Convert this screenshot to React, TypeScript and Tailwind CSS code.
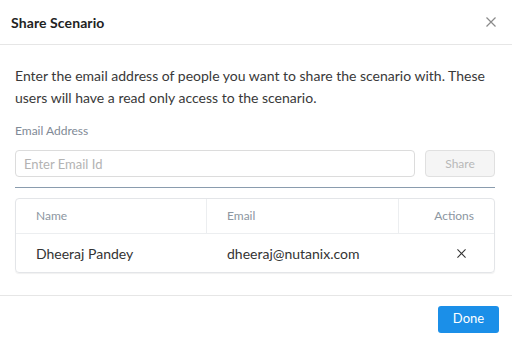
import React, { useState } from 'react';

interface Share {
  name: string;
  email: string;
}

const CloseIcon: React.FC<{ className?: string }> = ({ className }) => (
  <svg viewBox="0 0 10 10" className={className} fill="none" stroke="currentColor" strokeWidth="1.2">
    <path d="M0.5 0.5 L9.5 9.5 M9.5 0.5 L0.5 9.5" />
  </svg>
);

export default function App() {
  const [email, setEmail] = useState('');
  const [shares, setShares] = useState<Share[]>([
    { name: 'Dheeraj Pandey', email: 'dheeraj@nutanix.com' },
  ]);

  return (
    <div className="w-[512px] h-[342px] bg-white flex flex-col text-[#333] font-['Lato','Open_Sans',sans-serif]">
      {/* Header */}
      <div className="h-[45px] shrink-0 border-b border-[#e6e6e6] flex items-center justify-between pl-[11px] pr-[16px]">
        <h2 className="text-[14px] font-bold text-[#222] tracking-[0.1px]">Share Scenario</h2>
        <button className="text-[#8a8a8a]">
          <CloseIcon className="w-[10px] h-[10px]" />
        </button>
      </div>

      {/* Body */}
      <div className="flex-1 px-[15px] pt-[20px] pr-[17px]">
        <p className="text-[14px] leading-[22px] text-[#393939]">
          Enter the email address of people you want to share the scenario with. These users will have a read only access to the scenario.
        </p>

        <label className="block mt-[14px] text-[12px] leading-[16px] text-[#7f8a96]">Email Address</label>

        <div className="mt-[11px] flex gap-[10px]">
          <input
            value={email}
            onChange={(e) => setEmail(e.target.value)}
            placeholder="Enter Email Id"
            className="flex-1 h-[27px] rounded-[4px] border border-[#dcdcdc] px-[8px] text-[13px] outline-none placeholder:text-[#b3b3b3]"
          />
          <button
            disabled={!email}
            className="w-[70px] h-[27px] rounded-[4px] border border-[#e0e0e0] bg-[#f5f5f5] text-[12px] text-[#b8b8b8]"
          >
            Share
          </button>
        </div>

        <div className="mt-[10px] h-px bg-[#8a9cae]" />

        <div className="mt-[10px] rounded-[4px] border border-[#e3e5e8] shadow-[0_1px_1px_rgba(0,0,0,0.06)]">
          <div className="h-[35px] flex items-center border-b border-[#eceef0] text-[12px] text-[#8c96a1]">
            <div className="w-[191px] h-full flex items-center pl-[20px] border-r border-[#eceef0]">Name</div>
            <div className="w-[192px] h-full flex items-center pl-[20px] border-r border-[#eceef0]">Email</div>
            <div className="flex-1 h-full flex items-center justify-end pr-[20px]">Actions</div>
          </div>
          {shares.map((s) => (
            <div key={s.email} className="h-[38px] flex items-center text-[14px] text-[#333]">
              <div className="w-[191px] pl-[20px]">{s.name}</div>
              <div className="w-[192px] pl-[20px]">{s.email}</div>
              <div className="flex-1 flex justify-end pr-[28px]">
                <button onClick={() => setShares(shares.filter((x) => x !== s))} className="text-[#333]">
                  <CloseIcon className="w-[9px] h-[9px]" />
                </button>
              </div>
            </div>
          ))}
        </div>
      </div>

      {/* Footer */}
      <div className="h-[47px] shrink-0 border-t border-[#e6e6e6] flex items-center justify-end pr-[13px]">
        <button className="w-[61px] h-[27px] rounded-[3px] bg-[#1b8fe8] text-white text-[13px]">Done</button>
      </div>
    </div>
  );
}
